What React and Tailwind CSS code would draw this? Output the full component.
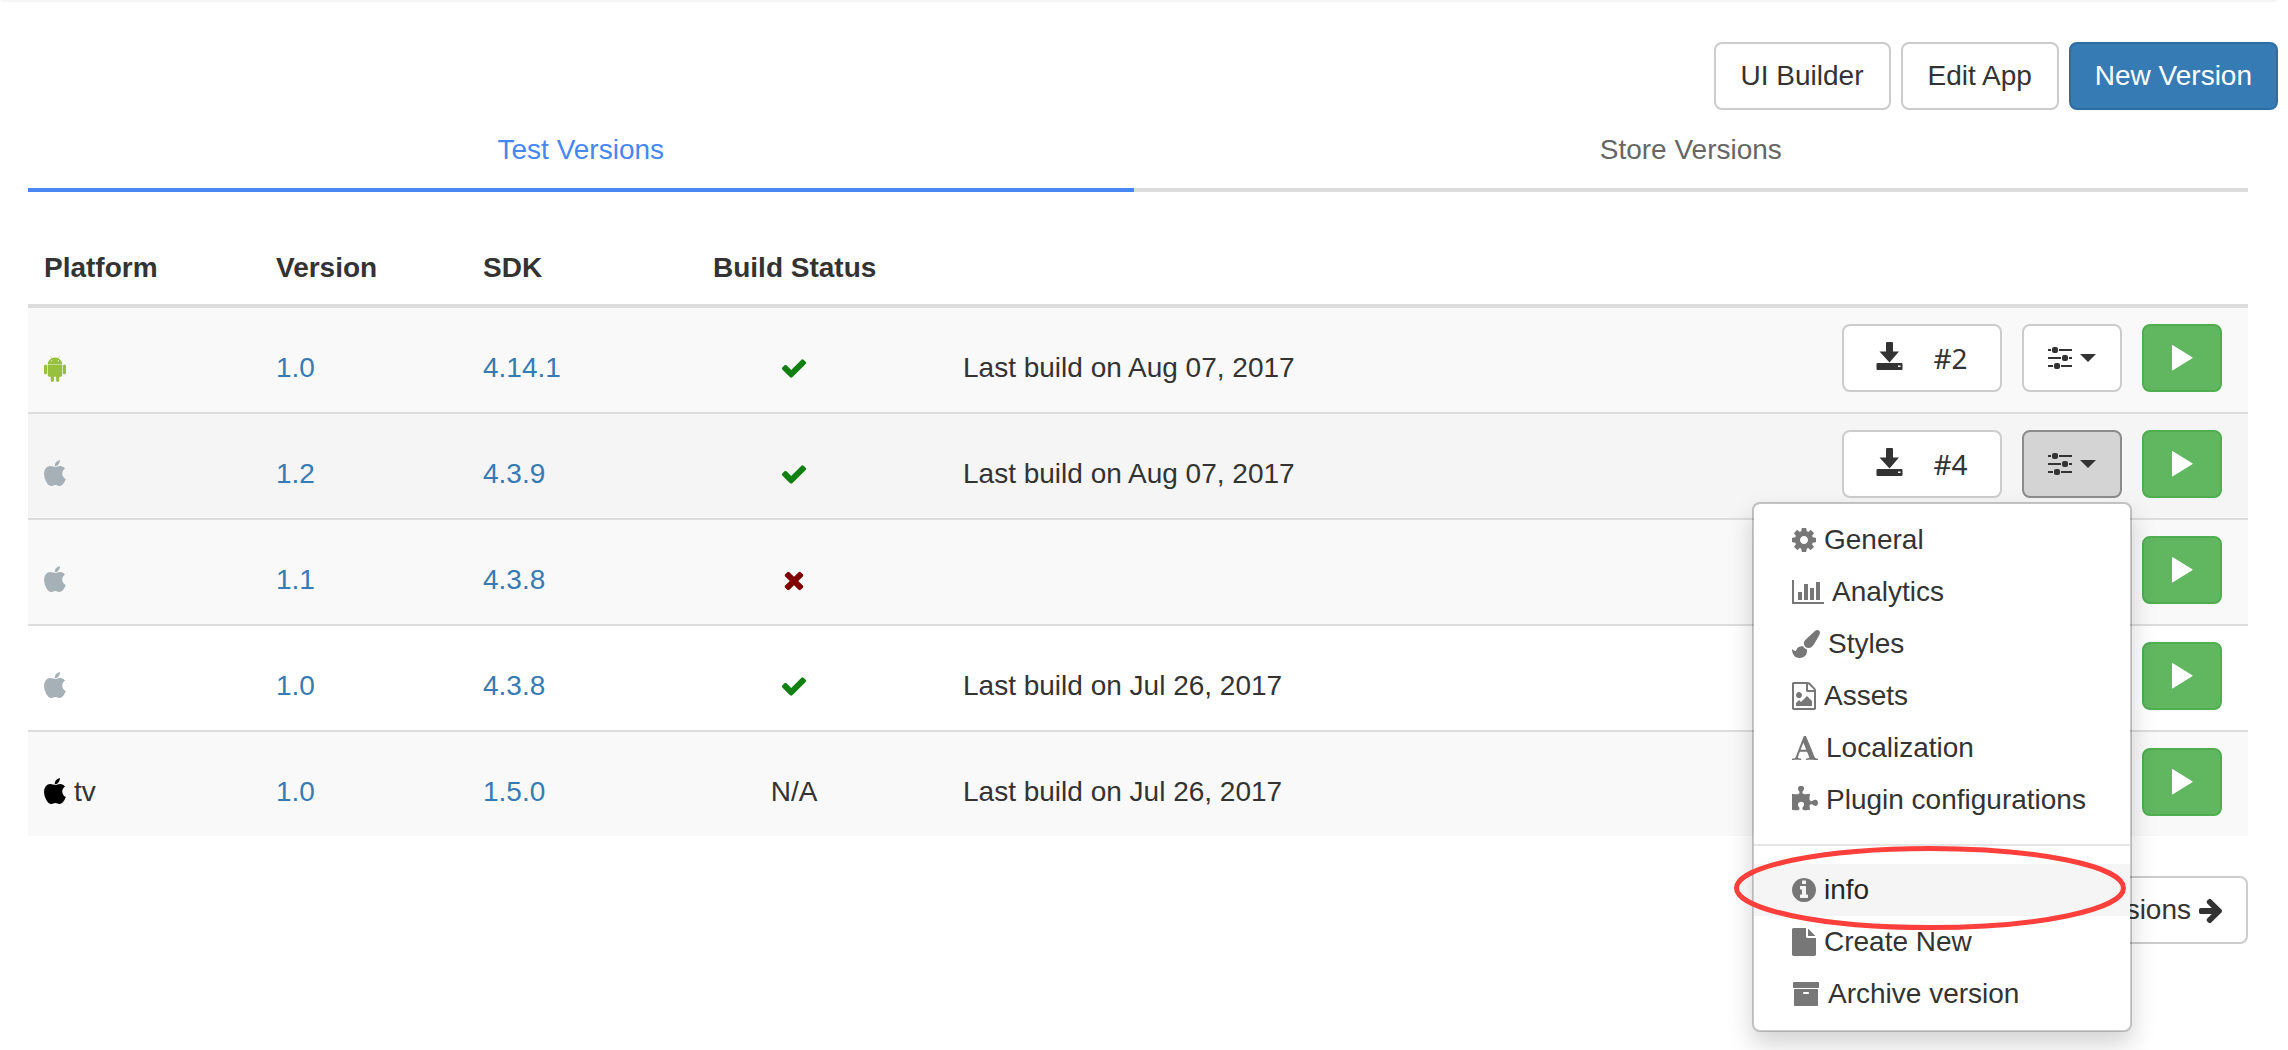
import React from "react";

const PATHS = {
  android: {
    box: "192 0 1408 1792",
    d: "M685 483q16 0 27.5-11.5t11.5-27.5-11.5-27.5-27.5-11.5-27 11.5-11 27.5 11 27.5 27 11.5zm422 0q16 0 27-11.5t11-27.5-11-27.5-27-11.5-27.5 11.5-11.5 27.5 11.5 27.5 27.5 11.5zm-812 184q42 0 72 30t30 72v430q0 43-29.5 73t-72.5 30-73-30-30-73v-430q0-42 30-72t73-30zm1060 19v666q0 46-32 78t-77 32h-75v227q0 43-30 73t-73 30-73-30-30-73v-227h-138v227q0 43-30 73t-73 30q-42 0-72-30t-30-73l-1-227h-74q-46 0-78-32t-32-78v-666h918zm-232-405q107 55 171 153.5t64 215.5h-925q0-117 64-215.5t172-153.5l-71-131q-7-13 5-20 13-6 20 6l72 132q95-42 201-42t201 42l72-132q7-12 20-6 12 7 5 20zm477 488v430q0 43-30 73t-73 30q-42 0-72-30t-30-73v-430q0-43 30-72.5t72-29.5q43 0 73 29.5t30 72.5z",
  },
  apple: {
    box: "192 0 1408 1792",
    d: "M1585 1215q-39 125-123 250-129 196-257 196-49 0-140-32-86-32-151-32-61 0-142 33-81 34-132 34-152 0-301-259-147-261-147-503 0-228 113-374 112-144 284-144 72 0 177 30 104 30 138 30 45 0 143-34 102-34 173-34 119 0 213 65 52 36 104 100-79 67-114 118-65 94-65 207 0 124 69 223t158 126zm-376-1173q0 61-29 136-30 75-93 138-54 54-108 72-37 11-104 17 3-149 78-257 74-107 250-148 1 3 2.5 11t2.5 11q0 4 .5 10t.5 10z",
  },
  check: {
    box: "0 0 1792 1792",
    d: "M1671 566q0 40-28 68l-724 724-136 136q-28 28-68 28t-68-28l-136-136-362-362q-28-28-28-68t28-68l136-136q28-28 68-28t68 28l294 295 656-657q28-28 68-28t68 28l136 136q28 28 28 68z",
  },
  times: {
    box: "0 0 1792 1792",
    d: "M1490 1322q0 40-28 68l-136 136q-28 28-68 28t-68-28l-294-294-294 294q-28 28-68 28t-68-28l-136-136q-28-28-28-68t28-68l294-294-294-294q-28-28-28-68t28-68l136-136q28-28 68-28t68 28l294 294 294-294q28-28 68-28t68 28l136 136q28 28 28 68t-28 68l-294 294 294 294q28 28 28 68z",
  },
  arrow: {
    box: "128 0 1472 1792",
    d: "M1600 960q0 54-37 91l-651 651q-39 37-91 37-51 0-90-37l-75-75q-38-38-38-91t38-91l293-293h-704q-52 0-84.5-37.5t-32.5-90.5v-128q0-53 32.5-90.5t84.5-37.5h704l-293-294q-38-36-38-90t38-90l75-75q38-38 90-38 53 0 91 38l651 651q37 35 37 90z",
  },
  cog: {
    box: "128 0 1536 1792",
    d: "M1152 896q0-106-75-181t-181-75-181 75-75 181 75 181 181 75 181-75 75-181zm512-109v222q0 12-8 23t-20 13l-185 28q-19 54-39 91 35 50 107 138 10 12 10 25t-9 23q-27 37-99 108t-94 71q-12 0-26-9l-138-108q-44 23-91 38-16 136-29 186-7 28-36 28h-222q-14 0-24.5-8.5t-11.5-21.5l-28-184q-49-16-90-37l-141 107q-10 9-25 9-14 0-25-11-126-114-165-168-7-10-7-23 0-12 8-23 15-21 51-66.5t54-70.5q-27-50-41-99l-183-27q-13-2-21-12.5t-8-23.5v-222q0-12 8-23t19-13l186-28q14-46 39-92-40-57-107-138-10-12-10-24 0-10 9-23 26-36 98.5-107.5t94.5-71.5q13 0 26 10l138 107q44-23 91-38 16-136 29-186 7-28 36-28h222q14 0 24.5 8.5t11.5 21.5l28 184q49 16 90 37l142-107q9-9 24-9 13 0 25 10 129 119 165 170 7 8 7 22 0 12-8 23-15 21-51 66.5t-54 70.5q26 50 41 98l183 28q13 2 21 12.5t8 23.5z",
  },
  chart: {
    box: "0 0 2048 1792",
    d: "M640 896v512h-256v-512h256zm384-512v1024h-256v-1024h256zm1024 1152v128h-2048v-1536h128v1408h1920zm-640-896v768h-256v-768h256zm384-384v1152h-256v-1152h256z",
  },
  brush: {
    box: "0 0 1792 1792",
    d: "M1615 0q70 0 122.5 46.5t52.5 116.5q0 63-45 151-332 629-465 752-97 91-218 91-126 0-216.5-92.5t-90.5-219.5q0-128 92-212l638-579q59-54 130-54zm-909 1034q39 76 106.5 130t150.5 76l1 71q4 213-129.5 347t-348.5 134q-123 0-218-46.5t-152.5-127.5-86.5-183-29-220q7 5 41 30t62 44.5 59 36.5 46 17q41 0 55-37 25-66 57.5-112.5t69.5-76 88-47.5 103-25.5 125-10.5z",
  },
  image: {
    box: "128 0 1536 1792",
    d: "M1596 380q28 28 48 76t20 88v1152q0 40-28 68t-68 28h-1344q-40 0-68-28t-28-68v-1600q0-40 28-68t68-28h896q40 0 88 20t76 48zm-444-244v376h376q-10-29-22-41l-313-313q-12-12-41-22zm384 1528v-1024h-416q-40 0-68-28t-28-68v-416h-768v1536h1280zm-128-448v320h-1024v-192l192-192 128 128 384-384zm-832-192q-80 0-136-56t-56-136 56-136 136-56 136 56 56 136-56 136-136 56z",
  },
  font: {
    box: "64 0 1664 1792",
    d: "M789 559l-170 450q33 0 136.5 2t160.5 2q19 0 57-2-87-253-184-452zm-725 1105l2-79q23-7 56-12.5t57-10.5 49.5-14.5 44.5-29 31-50.5l237-616 280-724h128q8 14 11 21l205 480q33 78 106 257.5t114 274.5q15 34 58 144.5t72 168.5q20 45 35 57 19 15 88 29.5t84 20.5q6 38 6 57 0 4-.5 13t-.5 13q-63 0-190-8t-191-8q-76 0-215 7t-178 8q0-43 4-78l131-28q1 0 12.5-2.5t15.5-3.5 14.5-4.5 15-6.5 11-8 9-11 2.5-14q0-16-31-96.5t-72-177.5-42-100l-450-2q-26 58-76.5 195.5t-50.5 162.5q0 22 14 37.5t43.5 24.5 48.5 13.5 57 8.5 41 4q1 19 1 58 0 9-2 27-58 0-174.5-10t-174.5-10q-8 0-26.5 4t-21.5 4q-80 14-188 14z",
  },
  puzzle: {
    box: "91 0 1664 1792",
    d: "M1755 1083q0 81-44.5 135t-123.5 54q-41 0-77.5-17.5t-59-38-56.5-38-71-17.5q-110 0-110 124 0 39 16 115t15 115v5q-22 0-33 1-34 3-97.5 11.5t-115.5 13.5-98 5q-61 0-103-26.5t-42-83.5q0-37 17.5-71t38-56.5 38-59 17.5-77.5q0-79-54-123.5t-135-44.5q-84 0-143 45.5t-59 127.5q0 43 15 83t33.5 64.5 33.5 53 15 50.5q0 45-46 89-37 35-117 35-95 0-245-24-9-2-27.5-4t-27.5-4l-13-2q-1 0-3-1-2 0-2-1v-1024q2 1 17.5 3.5t34 5 21.5 3.5q150 24 245 24 80 0 117-35 46-44 46-89 0-22-15-50.5t-33.5-53-33.5-64.5-15-83q0-82 59-127.5t144-45.5q80 0 134 44.5t54 123.5q0 41-17.5 77.5t-38 59-38 56.5-17.5 71q0 57 42 83.5t103 26.5q64 0 180-15t163-17v2q-1 2-3.5 17.5t-5 34-3.5 21.5q-24 150-24 245 0 80 35 117 44 46 89 46 22 0 50.5-15t53-33.5 64.5-33.5 83-15q82 0 127.5 59t45.5 143z",
  },
  info: {
    box: "128 0 1536 1792",
    d: "M1152 1376v-160q0-14-9-23t-23-9h-96v-512q0-14-9-23t-23-9h-320q-14 0-23 9t-9 23v160q0 14 9 23t23 9h96v320h-96q-14 0-23 9t-9 23v160q0 14 9 23t23 9h448q14 0 23-9t9-23zm-128-896v-160q0-14-9-23t-23-9h-192q-14 0-23 9t-9 23v160q0 14 9 23t23 9h192q14 0 23-9t9-23zm640 416q0 209-103 385.5t-279.5 279.5-385.5 103-385.5-103-279.5-279.5-103-385.5 103-385.5 279.5-279.5 385.5-103 385.5 103 279.5 279.5 103 385.5z",
  },
  file: {
    box: "128 0 1536 1792",
    d: "M1152 512v-472q22 14 36 28l408 408q14 14 28 36h-472zm-128 32q0 40 28 68t68 28h544v1056q0 40-28 68t-68 28h-1344q-40 0-68-28t-28-68v-1600q0-40 28-68t68-28h800v544z",
  },
  archive: {
    box: "0 0 1792 1792",
    d: "M1088 832q0-26-19-45t-45-19h-256q-26 0-45 19t-19 45 19 45 45 19h256q26 0 45-19t19-45zm576-192v960q0 26-19 45t-45 19h-1408q-26 0-45-19t-19-45v-960q0-26 19-45t45-19h1408q26 0 45 19t19 45zm64-448v256q0 26-19 45t-45 19h-1536q-26 0-45-19t-19-45v-256q0-26 19-45t45-19h1536q26 0 45 19t19 45z",
  },
};

function Icon({ name, className = "" }) {
  const { box, d } = PATHS[name];
  return (
    <svg viewBox={box} className={`h-7 w-auto shrink-0 ${className}`} fill="currentColor" aria-hidden="true">
      <path d={d} />
    </svg>
  );
}

function DownloadIcon() {
  return (
    <svg width="27" height="32" viewBox="0 0 27 32" fill="currentColor" aria-hidden="true">
      <path d="M11 0h5a1 1 0 0 1 1 1v8.500h6L13.500 20.500 3.500 9.500H10V1a1 1 0 0 1 1-1z" />
      <path
        fillRule="evenodd"
        d="M1.500 21h24a1 1 0 0 1 1 1v5a1 1 0 0 1-1 1h-24a1 1 0 0 1-1-1v-5a1 1 0 0 1 1-1zm20.500 2.500v1.500h2.500v-1.500z"
      />
    </svg>
  );
}

function SlidersIcon() {
  return (
    <svg width="24" height="24" viewBox="0 1 24 24" fill="currentColor" aria-hidden="true">
      <path d="M0 4h3v2H0zM11 4h13v2H11zM0 12h13v2H0zM21 12h3v2h-3zM0 20h5v2H0zM13 20h11v2H13z" />
      <rect x="4" y="2" width="6" height="6" rx="2" />
      <rect x="14" y="10" width="6" height="6" rx="2" />
      <rect x="6" y="18" width="6" height="6" rx="2" />
    </svg>
  );
}

function CaretIcon() {
  return (
    <svg width="16" height="8" viewBox="0 0 16 8" fill="currentColor" aria-hidden="true">
      <path d="M0 0h16L8 8z" />
    </svg>
  );
}

function PlayIcon() {
  return (
    <svg width="22" height="26" viewBox="0 0 22 26" fill="currentColor" aria-hidden="true">
      <path d="M1 0.500Q1-.3 1.900.3L21.300 12.300Q22 12.700 21.300 13.200L1.900 25.200Q1 25.700 1 24.900z" />
    </svg>
  );
}

const BTN = "flex h-[68px] items-center justify-center rounded-lg border-2 leading-10";
const BTN_DEFAULT = "border-[#ccc] bg-white text-[#333]";

const GENERAL_ITEMS = [
  { icon: "cog", label: "General" },
  { icon: "chart", label: "Analytics" },
  { icon: "brush", label: "Styles" },
  { icon: "image", label: "Assets" },
  { icon: "font", label: "Localization" },
  { icon: "puzzle", label: "Plugin configurations" },
];

const VERSION_ITEMS = [
  { icon: "info", label: "info", highlighted: true },
  { icon: "file", label: "Create New" },
  { icon: "archive", label: "Archive version" },
];

const ROWS = [
  { platform: "android", version: "1.0", sdk: "4.14.1", status: "ok", note: "Last build on Aug 07, 2017", build: "#2", bg: "bg-[#f9f9f9]" },
  { platform: "apple", version: "1.2", sdk: "4.3.9", status: "ok", note: "Last build on Aug 07, 2017", build: "#4", bg: "bg-[#f5f5f5]", open: true },
  { platform: "apple", version: "1.1", sdk: "4.3.8", status: "failed", note: "", bg: "bg-[#f9f9f9]" },
  { platform: "apple", version: "1.0", sdk: "4.3.8", status: "ok", note: "Last build on Jul 26, 2017", bg: "bg-white" },
  { platform: "tv", version: "1.0", sdk: "1.5.0", status: "na", note: "Last build on Jul 26, 2017", bg: "bg-[#f9f9f9]" },
];

function MenuItem({ icon, label, highlighted }) {
  return (
    <li className="relative">
      <a
        href="#"
        className={`flex items-center gap-2 py-1.5 pr-10 pl-[38px] leading-10 whitespace-nowrap ${
          highlighted ? "bg-[#f5f5f5] text-[#262626]" : "text-[#333]"
        }`}
      >
        <Icon name={icon} className="text-[#777]" />
        {label}
      </a>
      {highlighted && (
        <svg
          className="pointer-events-none absolute -top-[18px] -left-5 z-10 h-[84px] w-[392px]"
          viewBox="0 0 392 84"
          fill="none"
          aria-hidden="true"
        >
          <ellipse cx="196" cy="42" rx="193.500" ry="39.500" stroke="#ff3f3b" strokeWidth="5" />
        </svg>
      )}
    </li>
  );
}

function OptionsMenu() {
  return (
    <ul className="absolute top-full -right-2.5 z-10 mt-1 w-[380px] rounded-lg border-2 border-black/20 bg-white bg-clip-padding py-2.5 text-left shadow-[0_12px_24px_rgba(0,0,0,0.175)]">
      {GENERAL_ITEMS.map((item) => (
        <MenuItem key={item.label} {...item} />
      ))}
      <li role="separator" className="my-[18px] h-0.5 bg-[#e5e5e5]" />
      {VERSION_ITEMS.map((item) => (
        <MenuItem key={item.label} {...item} />
      ))}
    </ul>
  );
}

function Platform({ kind }) {
  if (kind === "android") return <Icon name="android" className="text-[#97c03d]" />;
  if (kind === "tv")
    return (
      <>
        <Icon name="apple" className="text-black" />
        tv
      </>
    );
  return <Icon name="apple" className="text-[#a6b1b7]" />;
}

function Status({ kind }) {
  if (kind === "ok") return <Icon name="check" className="text-[#118011]" />;
  if (kind === "failed") return <Icon name="times" className="text-[#800000]" />;
  return "N/A";
}

function VersionRow({ row, last }) {
  const cell = `px-4 pt-10 align-top ${last ? "" : "border-b-2 border-[#ddd]"}`;
  return (
    <tr className={row.bg}>
      <td className={cell}>
        <div className="flex h-10 items-center gap-2">
          <Platform kind={row.platform} />
        </div>
      </td>
      <td className={cell}>
        <a href="#" className="text-[#377bb5]">{row.version}</a>
      </td>
      <td className={cell}>
        <a href="#" className="text-[#377bb5]">{row.sdk}</a>
      </td>
      <td className={cell}>
        <div className="flex h-10 items-center justify-center">
          <Status kind={row.status} />
        </div>
      </td>
      <td className={`${cell} pl-[72px]`}>{row.note}</td>
      <td className={`pt-4 pr-[26px] pb-5 ${last ? "" : "border-b-2 border-[#ddd]"}`}>
        <div className="flex justify-end gap-5">
          {row.build && (
            <button className={`${BTN} ${BTN_DEFAULT} w-40 gap-[30px] font-['Noto_Sans','Open_Sans',sans-serif]`}>
              <DownloadIcon />
              {row.build}
            </button>
          )}
          <div className="relative">
            <button
              aria-label="Version options"
              aria-expanded={!!row.open}
              className={`${BTN} w-[100px] gap-2 text-[#333] ${
                row.open ? "border-[#8c8c8c] bg-[#d4d4d4]" : "border-[#ccc] bg-white"
              }`}
            >
              <SlidersIcon />
              <CaretIcon />
            </button>
            {row.open && <OptionsMenu />}
          </div>
          <button aria-label="Run" className={`${BTN} w-20 border-[#50ad50] bg-[#60b760] text-white`}>
            <PlayIcon />
          </button>
        </div>
      </td>
    </tr>
  );
}

export default function App() {
  return (
    <main className="min-h-screen bg-white font-['Liberation_Sans',Arial,sans-serif] text-[28px] leading-10 text-[#333]">
      <div className="mr-2.5 h-0.5 rounded-b-[8px_2px] bg-[#f5f5f5]" />

      <div className="flex justify-end gap-2.5 pt-10 pr-2.5">
        <button className={`${BTN} ${BTN_DEFAULT} px-[25px]`}>UI Builder</button>
        <button className={`${BTN} ${BTN_DEFAULT} px-[25px]`}>Edit App</button>
        <button className={`${BTN} border-[#2e6da4] bg-[#377bb5] px-6 text-white`}>New Version</button>
      </div>

      <div className="mr-10 ml-7">
        <nav className="flex text-center">
          <a href="#" aria-current="page" className="w-[49.8%] border-b-4 border-[#4687f4] pt-5 pb-[18px] text-[#4687f4]">
            Test Versions
          </a>
          <a href="#" className="flex-1 border-b-4 border-[#ddd] pt-5 pb-[18px] text-[#666]">
            Store Versions
          </a>
        </nav>

        <table className="mt-10 w-full table-fixed border-separate border-spacing-0 text-left">
          <colgroup>
            <col className="w-[232px]" />
            <col className="w-[207px]" />
            <col className="w-[230px]" />
            <col className="w-[194px]" />
            <col />
            <col />
          </colgroup>
          <thead>
            <tr>
              {["Platform", "Version", "SDK", "Build Status", "", ""].map((title, i) => (
                <th key={i} className="border-b-4 border-[#ddd] px-4 py-4 font-bold whitespace-nowrap">
                  {title}
                </th>
              ))}
            </tr>
          </thead>
          <tbody>
            {ROWS.map((row, i) => (
              <VersionRow key={i} row={row} last={i === ROWS.length - 1} />
            ))}
          </tbody>
        </table>

        <div className="flex justify-end pt-10">
          <button className={`${BTN} ${BTN_DEFAULT} gap-2 px-6`}>
            Show all versions
            <Icon name="arrow" />
          </button>
        </div>
      </div>
    </main>
  );
}
